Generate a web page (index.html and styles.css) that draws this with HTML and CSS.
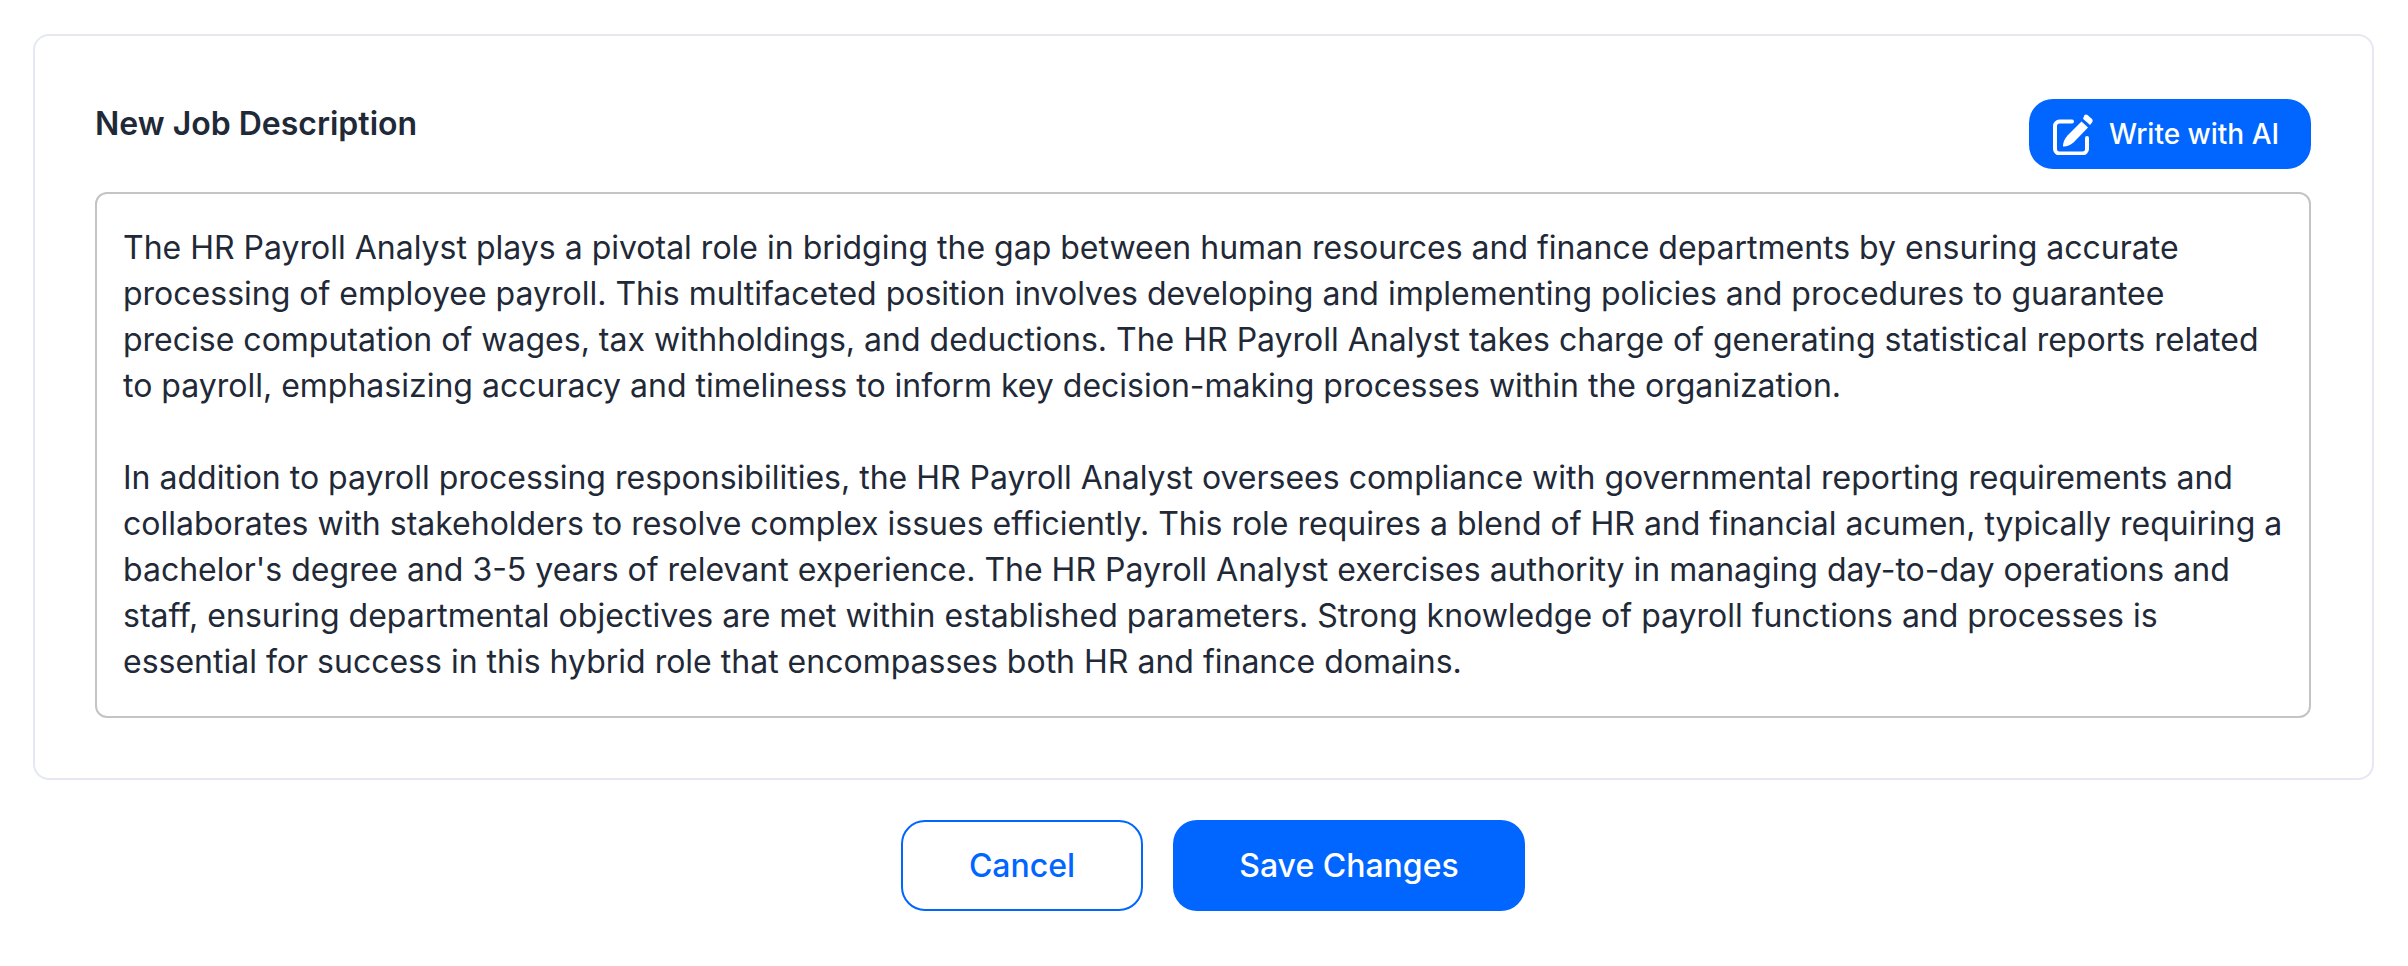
FILE: index.html
```html
<!DOCTYPE html>
<html lang="en">
<head>
<meta charset="utf-8">
<title>New Job Description</title>
<link rel="stylesheet" href="styles.css">
</head>
<body>
<main class="page">
  <section class="card">
    <header class="card-head">
      <h2 class="title">New Job Description</h2>
      <button class="ai-btn" type="button">
        <svg class="ai-icon" viewBox="0 0 40 41" width="40" height="41" aria-hidden="true">
          <path d="M19 7.500H6.500A4.500 4.500 0 0 0 2 12V35A4.500 4.500 0 0 0 6.500 39.500H29.500A4.500 4.500 0 0 0 34 35V24" fill="none" stroke="#fff" stroke-width="4" stroke-linecap="round"/>
          <path d="M28.500 7.500 L35 13.500 L20.500 28.500 Q15 33 10 32.500 Q10 26.500 14.500 21.500 Z" fill="#fff"/>
          <path d="M31.500 1 Q33 0 34.500 1 L39 5 Q40.300 6.700 39 8.500 L37 11 L30 4.800 Z" fill="#fff"/>
        </svg>
        <span>Write with AI</span>
      </button>
    </header>
    <div class="editor">
      <p>The HR Payroll Analyst plays a pivotal role in bridging the gap between human resources and finance departments by ensuring accurate processing of employee payroll. This multifaceted position involves developing and implementing policies and procedures to guarantee precise computation of wages, tax withholdings, and deductions. The HR Payroll Analyst takes charge of generating statistical reports related to payroll, emphasizing accuracy and timeliness to inform key decision-making processes within the organization.</p>
      <p>In addition to payroll processing responsibilities, the HR Payroll Analyst oversees compliance with governmental reporting requirements and collaborates with stakeholders to resolve complex issues efficiently. This role requires a blend of HR and financial acumen, typically requiring a bachelor's degree and 3-5 years of relevant experience. The HR Payroll Analyst exercises authority in managing day-to-day operations and staff, ensuring departmental objectives are met within established parameters. Strong knowledge of payroll functions and processes is essential for success in this hybrid role that encompasses both HR and finance domains.</p>
    </div>
  </section>
  <footer class="actions">
    <button class="btn btn-outline" type="button">Cancel</button>
    <button class="btn btn-solid" type="button">Save Changes</button>
  </footer>
</main>
</body>
</html>
```
FILE: styles.css
```css
* { box-sizing: border-box; }
html, body { margin: 0; background: #fff; }
body { font-family: Inter, "Liberation Sans", sans-serif; color: #1f2937; }
.page { padding: 34px 34px 0 33px; }
.card {
  height: 746px;
  border: 2px solid #e5e8f2;
  border-radius: 16px;
  padding: 63px 61px 0 60px;
}
.card-head { display: flex; justify-content: space-between; align-items: flex-start; height: 93px; }
.title { margin: 0; padding-top: 6px; font-size: 32px; line-height: 38px; font-weight: 600; color: #1f2937; }
.ai-btn {
  display: flex; align-items: center; gap: 16px;
  width: 282px; height: 70px; padding: 0 0 0 24px;
  border: 0; border-radius: 24px;
  background: #0066ff; color: #fff;
  font: 500 28px Inter, sans-serif;
}
.ai-icon { flex: none; }
.editor {
  height: 526px;
  border: 2px solid #c4c4c6;
  border-radius: 12px;
  padding: 31px 25px 0 26px;
  font-size: 32px; line-height: 46px; color: #1f2937;
}
.editor p { margin: 0 0 46px; }
.actions { display: flex; justify-content: center; gap: 30px; margin-top: 40px; padding-left: 19px; }
.btn {
  height: 91px; border-radius: 24px;
  font: 500 32px Inter, sans-serif;
}
.btn-outline { width: 242px; background: #fff; color: #0066ff; border: 2px solid #0066ff; }
.btn-solid { width: 352px; background: #0066ff; color: #fff; border: 0; }
```
